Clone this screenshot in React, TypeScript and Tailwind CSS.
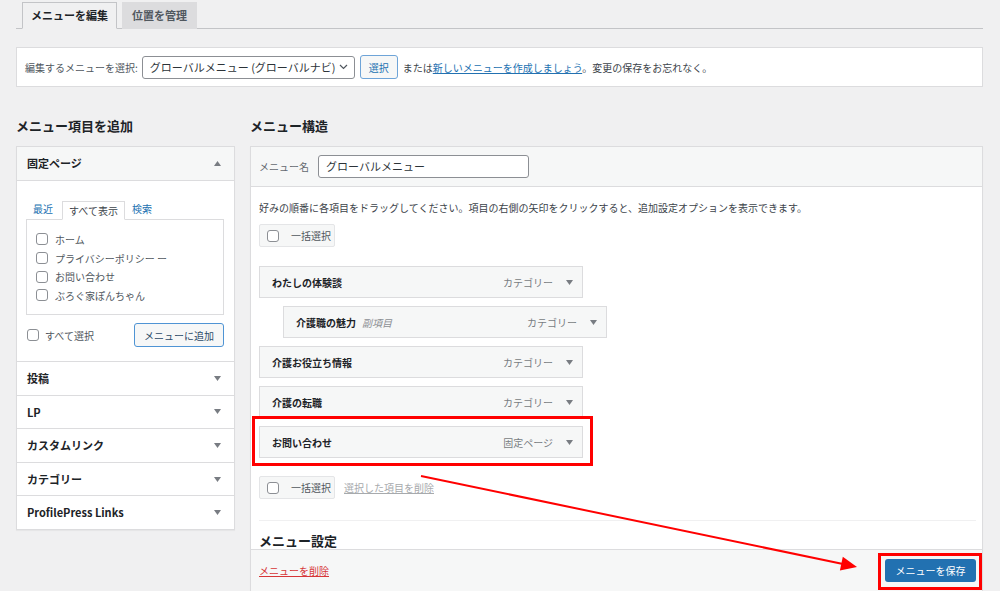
import React from 'react';

const font = "font-['Noto_Sans_CJK_JP','Noto_Sans',sans-serif]";

function Check() {
  return <span className="block w-[12px] h-[12px] shrink-0 rounded-[3px] border border-[#8c8f94] bg-white" />;
}

function Tri({ up = false }: { up?: boolean }) {
  return (
    <svg width="7" height="5" viewBox="0 0 7 5" className="shrink-0">
      <polygon points={up ? '0,5 7,5 3.5,0' : '0,0 7,0 3.5,5'} fill="#787c82" />
    </svg>
  );
}

function Section({ title }: { title: string }) {
  return (
    <div className="h-[33.6px] border-t border-[#dcdcde] pl-[10px] pr-[13px] flex items-center justify-between">
      <span className="text-[11px] font-bold text-[#1d2327]">{title}</span>
      <Tri />
    </div>
  );
}

function MenuItem({ title, type, sub, indent = false }: { title: string; type: string; sub?: string; indent?: boolean }) {
  return (
    <div className={`${indent ? 'ml-[24px]' : ''} w-[324px] h-[32px] border border-[#dcdcde] bg-[#f6f7f7] pl-[12px] pr-[9px] flex items-center`}>
      <span className="text-[10px] font-bold text-[#1d2327]">{title}</span>
      {sub && <span className="ml-[6px] text-[10px] italic text-[#8c8f94]">{sub}</span>}
      <span className="ml-auto text-[10px] text-[#787c82]">{type}</span>
      <span className="ml-[13px]"><Tri /></span>
    </div>
  );
}

function BulkButton() {
  return (
    <div className="h-[23px] w-[76px] border border-[#e4e5e7] bg-[#f6f7f7] rounded-[2px] flex items-center pl-[7px] gap-[12px]">
      <Check />
      <span className="text-[10px] text-[#50575e]">一括選択</span>
    </div>
  );
}

export default function App() {
  return (
    <div className={`${font} relative w-[1000px] h-[591px] overflow-hidden bg-[#f0f0f1] text-[#3c434a]`}>
      {/* tabs */}
      <div className="ml-[16px] mr-[17px] pt-[2px] pl-[6px] flex items-end gap-[5px] border-b border-[#c3c4c7] h-[29px]">
        <div className="-mb-px h-[27px] px-[8px] flex items-center bg-[#f0f0f1] border border-[#c3c4c7] border-b-[#f0f0f1] text-[11px] font-bold text-[#1d2327]">
          メニューを編集
        </div>
        <div className="-mb-px h-[27px] px-[9px] flex items-center bg-[#dcdcde] border border-[#dcdcde] text-[11px] font-bold text-[#50575e]">
          位置を管理
        </div>
      </div>

      {/* menu select */}
      <div className="ml-[16px] mr-[17px] mt-[18px] h-[40px] bg-white border border-[#dcdcde] pl-[8px] flex items-center text-[10px]">
        <span className="text-[#50575e]">編集するメニューを選択:</span>
        <div className="ml-[4px] h-[23px] w-[213px] border border-[#8c8f94] rounded-[3px] bg-white pl-[7px] pr-[6px] flex items-center justify-between">
          <span className="text-[11px] text-[#2c3338]">グローバルメニュー (グローバルナビ)</span>
          <svg width="9" height="6" viewBox="0 0 9 6">
            <polyline points="1,1 4.5,4.5 8,1" fill="none" stroke="#50575e" strokeWidth="1.2" />
          </svg>
        </div>
        <div className="ml-[5px] h-[24px] w-[38px] border border-[#6ea4d8] rounded-[3px] bg-[#f6f7f7] flex items-center justify-center text-[#2271b1]">
          選択
        </div>
        <span className="ml-[5px]">
          または<span className="text-[#2271b1] underline">新しいメニューを作成しましょう</span>。変更の保存をお忘れなく。
        </span>
      </div>

      <div className="ml-[16px] mr-[17px] mt-[29px] flex gap-[15px] items-start">
        {/* left column */}
        <div className="w-[219px] shrink-0">
          <h2 className="h-[20px] leading-[20px] mb-[10px] text-[13px] font-bold text-[#1d2327]">メニュー項目を追加</h2>
          <div className="bg-white border border-[#dcdcde] shadow-[0_1px_1px_rgba(0,0,0,0.04)]">
            <div className="h-[34px] bg-[#f6f7f7] border-b border-[#dcdcde] pl-[10px] pr-[13px] flex items-center justify-between">
              <span className="text-[11px] font-bold text-[#1d2327]">固定ページ</span>
              <Tri up />
            </div>
            <div className="pl-[9px] pr-[10px] pt-[20px] pb-[14px] text-[10px]">
              <div className="flex items-end h-[18px]">
                <span className="ml-[7px] mb-[3px] text-[#2271b1]">最近</span>
                <span className="ml-[9px] -mb-px h-[19px] px-[6px] flex items-center bg-white border border-[#dcdcde] border-b-white text-[#3c434a]">すべて表示</span>
                <span className="ml-[7px] mb-[3px] text-[#2271b1]">検索</span>
              </div>
              <div className="h-[96px] border border-[#dcdcde] pl-[9px] pt-[10px]">
                {['ホーム', 'プライバシーポリシー ー', 'お問い合わせ', 'ぶろぐ家ぽんちゃん'].map((t) => (
                  <div key={t} className="h-[18.7px] flex items-center gap-[7px]">
                    <Check />
                    <span className="text-[#50575e]">{t}</span>
                  </div>
                ))}
              </div>
              <div className="mt-[8px] flex items-center">
                <span className="ml-[1px]"><Check /></span>
                <span className="ml-[6px] text-[#50575e]">すべて選択</span>
                <div className="ml-auto h-[24px] w-[90px] border border-[#4f94d4] rounded-[3px] bg-[#f6f7f7] flex items-center justify-center text-[#2c4a68]">
                  メニューに追加
                </div>
              </div>
            </div>
            {['投稿', 'LP', 'カスタムリンク', 'カテゴリー', 'ProfilePress Links'].map((s) => (
              <Section key={s} title={s} />
            ))}
          </div>
        </div>

        {/* right column */}
        <div className="flex-1">
          <h2 className="h-[20px] leading-[20px] mb-[10px] text-[13px] font-bold text-[#1d2327]">メニュー構造</h2>
          <div className="border border-[#dcdcde] bg-white shadow-[0_1px_1px_rgba(0,0,0,0.04)]">
            <div className="h-[40px] bg-[#f6f7f7] border-b border-[#dcdcde] pl-[8px] flex items-center">
              <span className="text-[10px] text-[#646970]">メニュー名</span>
              <div className="ml-[9px] h-[23px] w-[211px] border border-[#8c8f94] rounded-[3px] bg-white pl-[7px] flex items-center text-[11px] text-[#2c3338]">
                グローバルメニュー
              </div>
            </div>
            <div className="pl-[8px] pr-[6px]">
              <p className="pt-[13px] h-[28px] leading-[15px] text-[10px] text-[#3c434a]">
                好みの順番に各項目をドラッグしてください。項目の右側の矢印をクリックすると、追加設定オプションを表示できます。
              </p>
              <div className="mt-[9px]"><BulkButton /></div>
              <div className="mt-[19px] flex flex-col gap-[8px]">
                <MenuItem title="わたしの体験談" type="カテゴリー" />
                <MenuItem title="介護職の魅力" sub="副項目" type="カテゴリー" indent />
                <MenuItem title="介護お役立ち情報" type="カテゴリー" />
                <MenuItem title="介護の転職" type="カテゴリー" />
                <MenuItem title="お問い合わせ" type="固定ページ" />
              </div>
              <div className="mt-[18px] flex items-center gap-[9px]">
                <BulkButton />
                <span className="text-[10px] text-[#a7aaad] underline">選択した項目を削除</span>
              </div>
              <div className="mt-[21px] border-t border-[#f0f0f1]" />
              <h3 className="mt-[11px] h-[17px] leading-[17px] text-[13px] font-bold text-[#1d2327]">メニュー設定</h3>
            </div>
            <div className="h-[60px] bg-[#f6f7f7] border-t border-[#dcdcde] pl-[8px] pr-[6px] pt-[9px] flex items-start justify-between">
              <span className="mt-[4px] text-[10px] text-[#d63638] underline">メニューを削除</span>
              <div className="h-[23px] w-[91px] rounded-[3px] bg-[#2271b1] flex items-center justify-center text-[10px] text-white">
                メニューを保存
              </div>
            </div>
          </div>
        </div>
      </div>

      {/* annotations */}
      <div className="absolute left-[252px] top-[416px] w-[341px] h-[50px] border-[3px] border-[#ff0000]" />
      <div className="absolute left-[878px] top-[553px] w-[104px] h-[37px] border-[3px] border-[#ff0000]" />
      <svg className="absolute left-0 top-0 pointer-events-none" width="1000" height="591">
        <line x1="421" y1="476" x2="843" y2="564" stroke="#ff0000" strokeWidth="2" />
        <polygon points="857,567 839.9,570.5 842.8,556.8" fill="#ff0000" />
      </svg>
    </div>
  );
}
